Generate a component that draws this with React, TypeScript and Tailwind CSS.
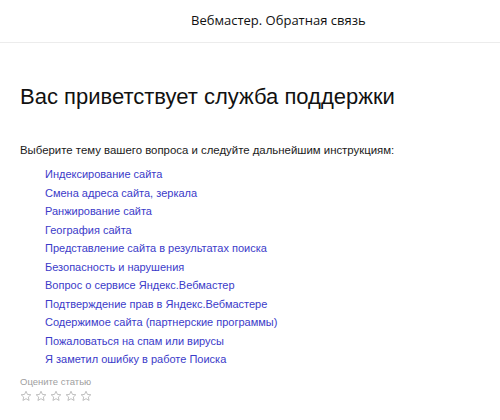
import React from "react";

const links = [
  "Индексирование сайта",
  "Смена адреса сайта, зеркала",
  "Ранжирование сайта",
  "География сайта",
  "Представление сайта в результатах поиска",
  "Безопасность и нарушения",
  "Вопрос о сервисе Яндекс.Вебмастер",
  "Подтверждение прав в Яндекс.Вебмастере",
  "Содержимое сайта (партнерские программы)",
  "Пожаловаться на спам или вирусы",
  "Я заметил ошибку в работе Поиска",
];

function Star() {
  return (
    <svg width="12" height="12" viewBox="0 0 24 24" fill="none" stroke="#b5b5b5" strokeWidth="1.7" strokeLinejoin="round">
      <path d="M12 2.5l2.9 6.3 6.8.7-5.1 4.6 1.5 6.8L12 17.4l-6.1 3.5 1.5-6.8-5.1-4.6 6.8-.7z" />
    </svg>
  );
}

export default function App() {
  return (
    <div className="w-[500px] h-[420px] bg-white overflow-hidden" style={{ fontFamily: '"Liberation Sans", Arial, sans-serif' }}>
      <div className="h-[43px] border-b border-[#ececec] flex items-center pl-[191px]">
        <span className="text-[13px] text-[#111]" style={{ fontFamily: '"Open Sans", "Noto Sans", sans-serif' }}>
          Вебмастер. Обратная связь
        </span>
      </div>
      <div className="pl-[20px]">
        <h1 className="text-[22px] leading-[26px] text-[#111] mt-[41px]">Вас приветствует служба поддержки</h1>
        <p className="text-[11.4px] leading-[16px] text-[#1a1a1a] mt-[32px]">
          Выберите тему вашего вопроса и следуйте дальнейшим инструкциям:
        </p>
        <ul className="pl-[25px] mt-[7px]">
          {links.map((l) => (
            <li key={l} className="text-[11px] leading-[18.5px] text-[#3b3bc9]">
              <a href="#">{l}</a>
            </li>
          ))}
        </ul>
        <div className="text-[9.5px] leading-[12px] text-[#a0a0a0] mt-[7px]">Оцените статью</div>
        <div className="flex gap-[3px] mt-[2px]">
          {[0, 1, 2, 3, 4].map((i) => (
            <Star key={i} />
          ))}
        </div>
      </div>
    </div>
  );
}
